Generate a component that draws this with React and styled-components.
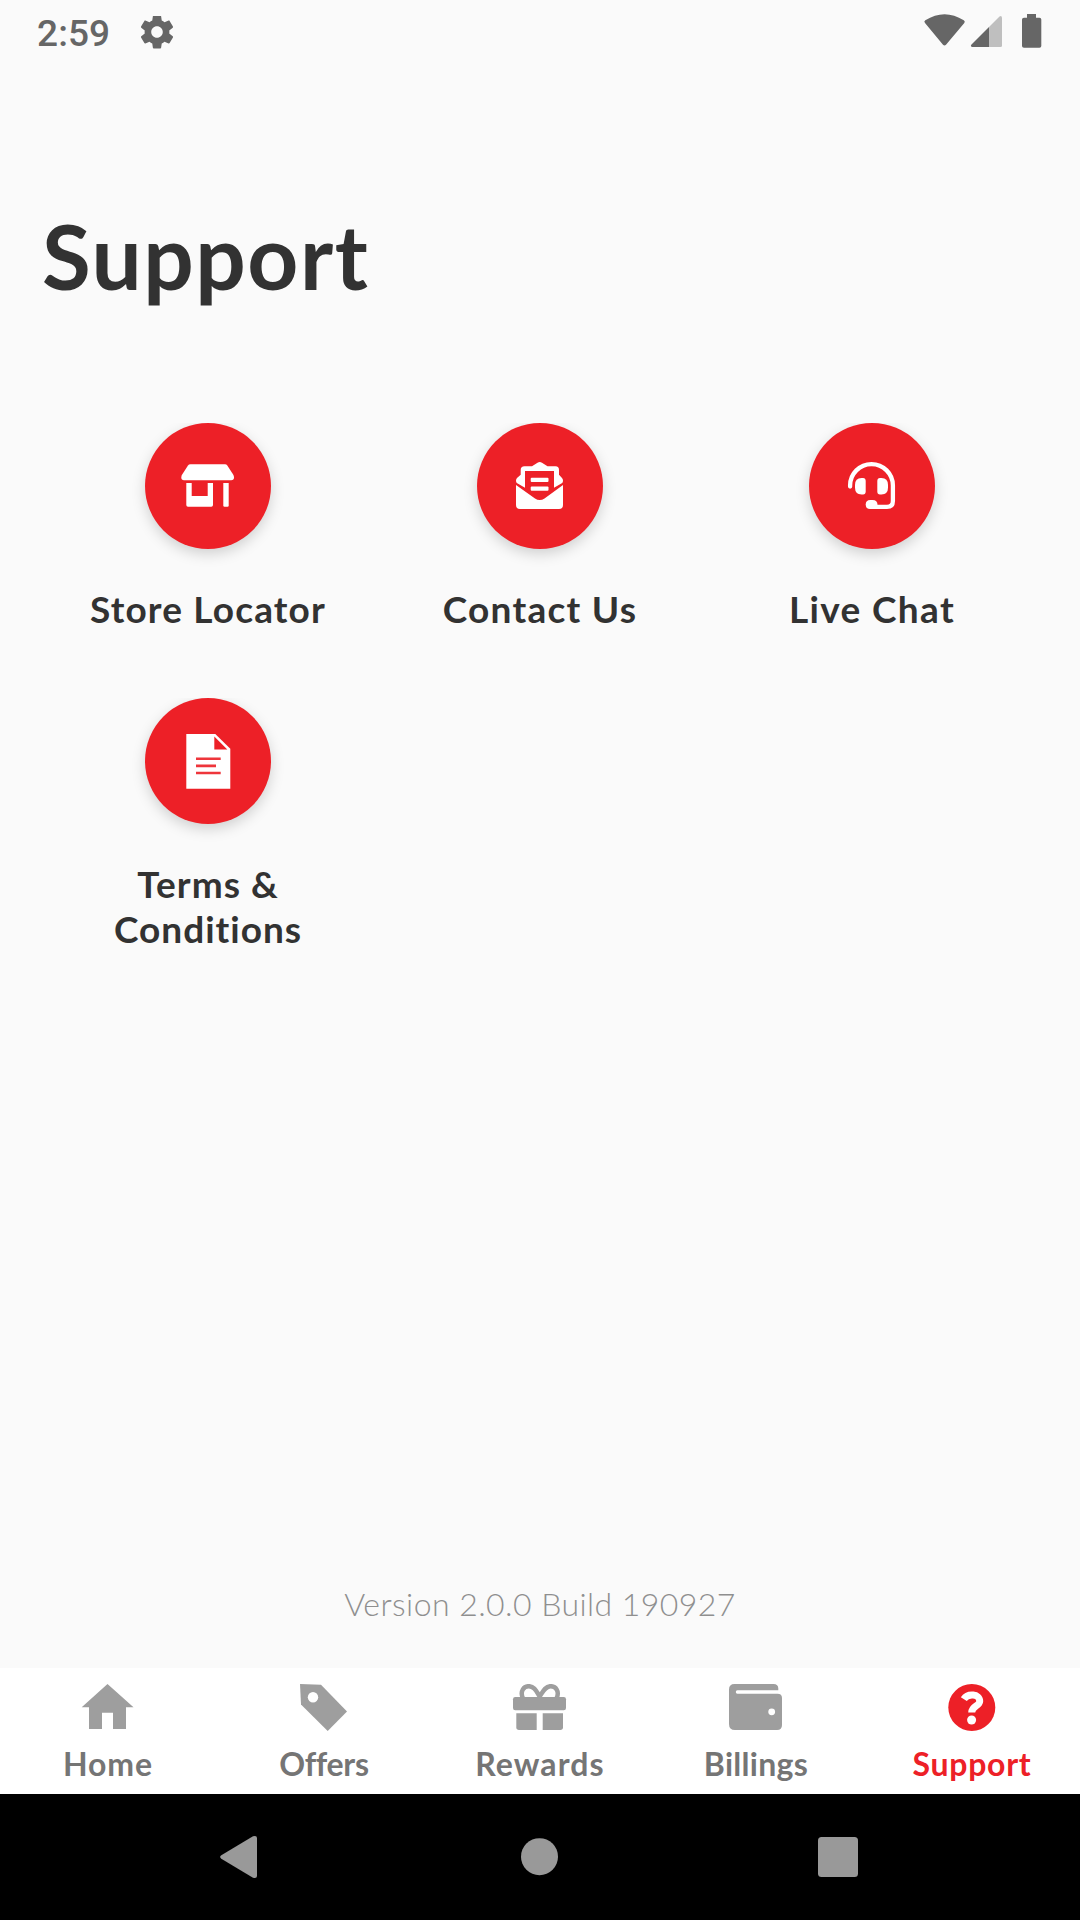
import React from "react";
import styled, { createGlobalStyle } from "styled-components";

const GlobalStyle = createGlobalStyle`
  * {
    box-sizing: border-box;
    margin: 0;
    padding: 0;
  }

  body {
    background-color: #fafafa;
    font-family: Lato, "Open Sans", sans-serif;
  }
`;

const Screen = styled.div`
  width: 1080px;
  height: 1920px;
  display: flex;
  flex-direction: column;
  background-color: #fafafa;
  overflow: hidden;
`;

const StatusBar = styled.header`
  height: 64px;
  padding: 0 38px 0 37px;
  display: flex;
  align-items: center;
  justify-content: space-between;
`;

const StatusGroup = styled.div`
  display: flex;
  align-items: center;
`;

const Clock = styled.span`
  width: 103px;
  height: 64px;
  padding-top: 2px;
  font-family: Roboto, sans-serif;
  font-size: 37px;
  font-weight: 500;
  line-height: 64px;
  letter-spacing: 0.1px;
  color: #666;
`;

const Title = styled.h1`
  margin: 140px 0 0 42px;
  height: 104px;
  font-size: 89px;
  line-height: 104px;
  font-weight: 700;
  letter-spacing: 1.5px;
  color: #323232;
`;

const Menu = styled.main`
  flex: 1;
  margin: 115px 42px 0;
  display: grid;
  grid-template-columns: repeat(3, 332px);
  grid-auto-rows: 275px;
`;

const MenuItem = styled.a`
  display: flex;
  flex-direction: column;
  align-items: center;
`;

const Circle = styled.div`
  width: 126px;
  height: 126px;
  border-radius: 50%;
  background-color: #ed2027;
  box-shadow: 0 5px 14px rgba(0, 0, 0, 0.17);
  clip-path: inset(0 -30px -30px -30px);
`;

const MenuLabel = styled.span`
  width: 250px;
  margin-top: 37px;
  font-size: 37px;
  line-height: 45px;
  font-weight: 700;
  letter-spacing: ${(props) => props.$track}px;
  text-align: center;
  white-space: pre-line;
  color: #323232;
`;

const Version = styled.p`
  height: 40px;
  margin-bottom: 44px;
  font-size: 32px;
  line-height: 40px;
  font-weight: 300;
  letter-spacing: 0.45px;
  text-align: center;
  color: #8f8f8f;
`;

const TabBar = styled.nav`
  height: 126px;
  display: grid;
  grid-template-columns: repeat(5, 1fr);
  background-color: #fff;
`;

const Tab = styled.a`
  display: flex;
  flex-direction: column;
  align-items: center;
  padding-top: 16px;
  color: ${(props) => (props.$active ? "#ed2027" : "#9e9e9e")};
`;

const TabLabel = styled.span`
  margin-top: 12px;
  font-size: 32px;
  line-height: 40px;
  font-weight: 700;
  letter-spacing: ${(props) => props.$track}px;
  color: ${(props) => (props.$active ? "#ed2027" : "#757575")};
`;

const SystemBar = styled.footer`
  height: 126px;
  padding: 0 222px 0 220px;
  display: grid;
  grid-template-columns: 1fr auto 1fr;
  align-items: center;
  background-color: #000;

  svg:last-child {
    justify-self: end;
  }
`;

const Glyph = styled.svg`
  display: block;
  flex: none;
`;

const StoreIcon = () => (
  <Glyph width="126" height="126" viewBox="0 0 126 126" fill="#fff">
    <path d="M45.5 41.3H80Q81.500 41.300 82.300 42.500L88.300 51.800Q89 53 89 54.500Q89 57.300 86.200 57.300H39Q36.300 57.300 36.300 54.500Q36.300 53 37 51.800L43 42.500Q43.800 41.300 45.500 41.300Z" />
    <path d="M41.300 60H46.700V73H62.700V60H68V82Q68 83.700 66.300 83.700H43Q41.300 83.700 41.300 82Z" />
    <path d="M78.300 60H83.700V82.500Q83.700 83.700 82.500 83.700H79.500Q78.300 83.700 78.300 82.500Z" />
  </Glyph>
);

const MailIcon = () => (
  <Glyph width="126" height="126" viewBox="0 0 126 126" fill="#fff">
    <path
      fillRule="evenodd"
      d="M48 64.700L39.800 60Q39 59.400 39 57.500Q39 56 40 55L43.700 51.700V47Q43.700 43.300 47.500 43.300H55L60.500 39.700Q62.800 38.300 65 39.700L70.500 43.300H78.500Q82 43.300 82 47V51.700L85 55Q86 56 86 57.500Q86 59.400 85.200 60L77 64.700V48H48Z"
    />
    <path d="M39 62L58 75.500Q62.700 78.500 67.500 75.500L86 62V82Q86 86 82 86H43Q39 86 39 82Z" />
    <rect x="53.700" y="54.800" width="17.800" height="4.200" rx="1" />
    <rect x="53.700" y="63.500" width="17.800" height="4.200" rx="1" />
  </Glyph>
);

const HeadsetIcon = () => (
  <Glyph width="126" height="126" viewBox="0 0 126 126" fill="#fff">
    <path
      d="M41.100 63.500V62.500A21.400 21.400 0 0 1 83.900 62.500V78Q83.900 83.900 78 83.900H62"
      fill="none"
      stroke="#fff"
      strokeWidth="4.300"
      strokeLinecap="round"
    />
    <path d="M52.500 55H54Q56.700 55 56.700 58V68.400Q56.700 71.400 54 71.400H52.500Q46 71.400 46 64.500V62Q46 55 52.500 55Z" />
    <path d="M71 55H72.500Q79 55 79 62V64.500Q79 71.400 72.500 71.400H71Q68.300 71.400 68.300 68.400V58Q68.300 55 71 55Z" />
    <path d="M61.200 77H63.500Q68.500 77 68.500 82V86H61.200Q56.700 86 56.700 81.500Q56.700 77 61.200 77Z" />
  </Glyph>
);

const DocumentIcon = () => (
  <Glyph width="126" height="126" viewBox="0 0 126 126">
    <path d="M41.300 36H70.300L85.300 50.700V90.700H41.300Z" fill="#fff" />
    <path d="M69.300 38.500V51.500H82.300Z" fill="#ed2027" />
    <path d="M51 60.700H75.700M51 67.900H71M51 75H75.700" stroke="#ee353b" strokeWidth="2.600" />
  </Glyph>
);

const HomeIcon = () => (
  <Glyph width="60" height="48" viewBox="0 0 60 48" fill="currentColor">
    <path d="M29.500 0L55.500 23.300H48V44.900H35V28.700H24V44.900H11V23.300H3.700Z" />
  </Glyph>
);

const TagIcon = () => (
  <Glyph width="60" height="48" viewBox="0 0 60 48" fill="currentColor">
    <path d="M6 0L27 0.800L53 27.600L33.700 47L7 20.600Z" />
    <circle cx="19" cy="13.300" r="5.200" fill="#fff" />
  </Glyph>
);

const GiftIcon = () => (
  <Glyph width="60" height="48" viewBox="0 0 60 48" fill="currentColor">
    <path
      d="M13 14.500C9.500 7 14 2.200 18.700 2.200C24.500 2.200 26.500 7.500 29.700 12.500C33 7.500 35 2.200 40.700 2.200C45.500 2.200 50 7 46.500 14.500"
      fill="none"
      stroke="currentColor"
      strokeWidth="4.500"
    />
    <rect x="3" y="13" width="53" height="13.200" rx="2.200" />
    <path d="M6.300 29.300H26.700V46H9Q6.300 46 6.300 43.300Z" />
    <path d="M32.700 29.300H53V43.300Q53 46 50.300 46H32.700Z" />
  </Glyph>
);

const WalletIcon = () => (
  <Glyph width="60" height="48" viewBox="0 0 60 48" fill="currentColor">
    <path
      fillRule="evenodd"
      d="M8.500 0H47.500Q52.300 0 52.300 4.500V6.300H11.300Q9.800 6.300 9.800 8Q9.800 9.700 11.300 9.700H51.500Q56 9.700 56 14V41Q56 46 51 46H9Q3 46 3 40V5.500Q3 0 8.500 0Z"
    />
    <circle cx="45.700" cy="27.800" r="3.400" fill="#fff" />
  </Glyph>
);

const HelpIcon = () => (
  <Glyph width="60" height="48" viewBox="0 0 60 48" fill="currentColor">
    <circle cx="29.800" cy="23.500" r="23.500" />
    <path
      d="M21.800 15.200C25.500 9.300 37.800 9.500 37.700 17.300C37.600 22.200 29.700 21.800 29.700 28.500"
      fill="none"
      stroke="#fff"
      strokeWidth="7"
    />
    <circle cx="29.600" cy="36" r="4.500" fill="#fff" />
  </Glyph>
);

const menu = [
  { label: "Store Locator", icon: StoreIcon, track: 1.15 },
  { label: "Contact Us", icon: MailIcon, track: 1.25 },
  { label: "Live Chat", icon: HeadsetIcon, track: 1.35 },
  { label: "Terms &\nConditions", icon: DocumentIcon, track: 1 },
];

const tabs = [
  { label: "Home", icon: HomeIcon, track: 0.9 },
  { label: "Offers", icon: TagIcon, track: -0.3 },
  { label: "Rewards", icon: GiftIcon, track: 1.1 },
  { label: "Billings", icon: WalletIcon, track: 0.3 },
  { label: "Support", icon: HelpIcon, track: 0.7, active: true },
];

const App = () => {
  return (
    <Screen>
      <GlobalStyle />
      <StatusBar>
        <StatusGroup>
          <Clock>2:59</Clock>
          <Glyph width="34" height="33" viewBox="2 2.3 20 20" fill="#666">
            <path d="M19.430 12.980c.04-.32.07-.64.07-.98s-.03-.66-.07-.98l2.110-1.650c.19-.15.24-.42.12-.64l-2-3.460c-.12-.22-.39-.3-.61-.22l-2.490 1c-.52-.4-1.080-.73-1.690-.98l-.38-2.650C14.460 2.180 14.250 2 14 2h-4c-.25 0-.46.18-.49.42l-.38 2.650c-.61.25-1.170.59-1.690.98l-2.490-1c-.23-.09-.49 0-.61.22l-2 3.460c-.13.22-.07.49.12.64l2.110 1.650c-.04.32-.07.65-.07.98s.03.66.07.98l-2.110 1.650c-.19.15-.24.42-.12.64l2 3.460c.12.22.39.3.61.22l2.490-1c.52.4 1.080.73 1.690.98l.38 2.650c.03.24.24.42.49.42h4c.25 0 .46-.18.49-.42l.38-2.650c.61-.25 1.170-.59 1.690-.98l2.490 1c.23.09.49 0 .61-.22l2-3.460c.12-.22.07-.49-.12-.64l-2.110-1.650zM12 15.500c-1.930 0-3.500-1.570-3.500-3.500s1.570-3.500 3.500-3.500 3.500 1.570 3.500 3.500-1.570 3.500-3.500 3.500z" />
          </Glyph>
        </StatusGroup>
        <Glyph width="120" height="64" viewBox="922 0 120 64" fill="#666">
          <path d="M925 23Q923.500 21.500 925.300 20.300Q944.500 8 963.800 20.300Q965.500 21.500 964.300 23L946 44.700Q944.500 46.300 943 44.700Z" />
          <path d="M989 47H972Q970 46.300 971.500 44.500L989 27Z" />
          <path d="M989 27L999.500 16.500Q1001.500 15 1002 17.500V45.500Q1002 47 1000.500 47H989Z" fill="#bfbfbf" />
          <path d="M1027 14H1036V17.700H1039.500Q1041.300 17.700 1041.300 19.500V46Q1041.300 47.800 1039.500 47.800H1024Q1022 47.800 1022 46V19.500Q1022 17.700 1024 17.700H1027Z" />
        </Glyph>
      </StatusBar>
      <Title>Support</Title>
      <Menu>
        {menu.map(({ label, icon: Icon, track }) => (
          <MenuItem key={label}>
            <Circle>
              <Icon />
            </Circle>
            <MenuLabel $track={track}>{label}</MenuLabel>
          </MenuItem>
        ))}
      </Menu>
      <Version>Version 2.0.0 Build 190927</Version>
      <TabBar>
        {tabs.map(({ label, icon: Icon, track, active }) => (
          <Tab key={label} $active={active}>
            <Icon />
            <TabLabel $track={track} $active={active}>
              {label}
            </TabLabel>
          </Tab>
        ))}
      </TabBar>
      <SystemBar>
        <Glyph width="37" height="44" viewBox="0 0 37 44" fill="#999">
          <path d="M1.300 20.300L33 1.300Q36.800 0 37 3V41Q36.800 44 33 42.700L1.300 23.700Q-1 22 1.300 20.300Z" />
        </Glyph>
        <Glyph width="38" height="38" viewBox="0 0 38 38" fill="#999">
          <circle cx="19.500" cy="18.700" r="18.500" />
        </Glyph>
        <Glyph width="40" height="40" viewBox="0 0 40 40" fill="#999">
          <rect width="40" height="40" rx="3.500" />
        </Glyph>
      </SystemBar>
    </Screen>
  );
};

export default App;
